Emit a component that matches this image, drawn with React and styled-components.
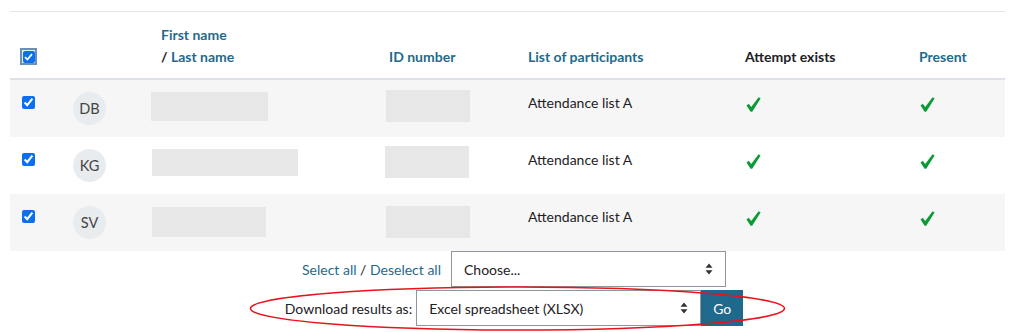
import React from 'react';
import styled, { createGlobalStyle } from 'styled-components';

//* Styles

const GlobalStyle = createGlobalStyle`
  *,
  *:before,
  *:after {
    box-sizing: border-box;
  }
  body {
    margin: 0;
    background-color: #fff;
    font-family: 'Lato', 'Open Sans', sans-serif;
    font-size: 14px;
    color: #1d2125;
  }
`;

const Page = styled.div`
  position: relative;
  width: 1024px;
  height: 332px;
  overflow: hidden;
  padding-top: 11px;
`;

const Table = styled.table`
  margin-left: 10px;
  width: 995px;
  border-collapse: collapse;
  table-layout: fixed;
`;

const Th = styled.th`
  width: ${p => p.w}px;
  padding: 12px 12px 10px;
  line-height: 22px;
  text-align: left;
  vertical-align: bottom;
  font-weight: 700;
  color: ${p => (p.plain ? '#1d2125' : '#1f6a8c')};
  border-top: 1px solid #e3e6ea;
  border-bottom: 2px solid #dee2e6;
`;

const Row = styled.tr`
  background: ${p => (p.striped ? '#f6f6f6' : '#fff')};
  & + & td {
    border-top: 1px solid #e8e8e8;
  }
`;

const Td = styled.td`
  padding: 12px;
  line-height: 21px;
  vertical-align: top;
`;

const Check = styled.input`
  margin: 4px 0 0;
  width: 13px;
  height: 13px;
  accent-color: #0b6ff0;
  display: block;
`;

const HeadCheck = styled.span`
  display: flex;
  align-items: center;
  justify-content: center;
  width: 17px;
  height: 17px;
  margin: 0 0 3px -2px;
  border: 2px solid #6a8fb8;
  background: #e6eef8;
`;

const HeadBox = styled.span`
  display: flex;
  align-items: center;
  justify-content: center;
  width: 12px;
  height: 12px;
  border-radius: 2px;
  background: #0b6ff0;
`;

const Avatar = styled.div`
  width: 33px;
  height: 33px;
  margin-left: 1px;
  border-radius: 50%;
  background: #e9ecef;
  color: #444;
  font-size: 14.5px;
  display: flex;
  align-items: center;
  justify-content: center;
`;

const Redact = styled.div`
  width: ${p => p.w}px;
  height: ${p => p.h}px;
  margin-left: ${p => p.dx}px;
  margin-top: ${p => p.dy}px;
  background: #e7e7e7;
`;

const Green = styled.svg`
  display: block;
  margin: 5px 0 0 1px;
`;

const Controls = styled.div`
  display: flex;
  flex-direction: column;
  align-items: center;
  gap: 3px;
  padding-left: 4px;
`;

const Line = styled.div`
  display: flex;
  align-items: center;
  gap: ${p => p.gap}px;
`;

const Link = styled.a`
  color: #1f6a8c;
  text-decoration: none;
`;

const Label = styled.span`
  color: #1d2125;
`;

const Select = styled.div`
  width: ${p => p.w}px;
  height: 36px;
  padding: 0 12px;
  border: 1px solid #8f959e;
  background: #fff;
  color: #1d2125;
  display: flex;
  align-items: center;
  justify-content: space-between;
`;

const Joined = styled.div`
  display: flex;
`;

const Button = styled.button`
  height: 36px;
  width: 42px;
  border: none;
  background: #1f6a8c;
  color: #fff;
  font-family: inherit;
  font-size: 14px;
  padding: 0;
`;

const Ellipse = styled.svg`
  position: absolute;
  left: 0;
  top: 0;
  pointer-events: none;
`;

//* -------------------------------------------------------------------------

const Tick = () => (
  <Green width="15" height="15" viewBox="0 0 15 15">
    <path d="M0.5 8.6 L2.8 6.8 L5.2 10 L12.6 0.3 L14.6 1.6 L6.2 14.8 L4.6 14.8 Z" fill="#0c9a36" />
  </Green>
);

const Arrows = () => (
  <svg width="8" height="12" viewBox="0 0 8 12">
    <path d="M4 0.5 L7.5 4.8 L0.5 4.8 Z M4 11.5 L7.5 7.2 L0.5 7.2 Z" fill="#333" />
  </svg>
);

// redaction boxes: [width, height, x offset, y offset]
const rows = [
  { initials: 'DB', name: [117, 29, -10, 0], id: [84, 32, -3, -2] },
  { initials: 'KG', name: [146, 27, -9, 0], id: [84, 32, -4, -3] },
  { initials: 'SV', name: [114, 30, -9, 1], id: [84, 32, -3, 0] }
];

const App = () => (
  <Page>
    <GlobalStyle />
    <Table>
      <thead>
        <tr>
          <Th w={50}>
            <HeadCheck>
              <HeadBox>
                <svg width="9" height="8" viewBox="0 0 9 8">
                  <path d="M1 4.2 L3.4 6.5 L8 1.2" stroke="#fff" strokeWidth="1.8" fill="none" />
                </svg>
              </HeadBox>
            </HeadCheck>
          </Th>
          <Th w={89}></Th>
          <Th w={228}>
            First name
            <br />
            <Label>/ </Label>Last name
          </Th>
          <Th w={139}>ID number</Th>
          <Th w={217}>List of participants</Th>
          <Th w={174} plain>Attempt exists</Th>
          <Th w={98}>Present</Th>
        </tr>
      </thead>
      <tbody>
        {rows.map((r, i) => (
          <Row key={r.initials} striped={i !== 1}>
            <Td>
              <Check type="checkbox" checked readOnly />
            </Td>
            <Td>
              <Avatar>{r.initials}</Avatar>
            </Td>
            <Td>
              <Redact w={r.name[0]} h={r.name[1]} dx={r.name[2]} dy={r.name[3]} />
            </Td>
            <Td>
              <Redact w={r.id[0]} h={r.id[1]} dx={r.id[2]} dy={r.id[3]} />
            </Td>
            <Td>Attendance list A</Td>
            <Td>
              <Tick />
            </Td>
            <Td>
              <Tick />
            </Td>
          </Row>
        ))}
      </tbody>
    </Table>
    <Controls>
      <Line gap={10}>
        <span>
          <Link href="#">Select all</Link> / <Link href="#">Deselect all</Link>
        </span>
        <Select w={275}>
          Choose...
          <Arrows />
        </Select>
      </Line>
      <Line gap={4}>
        <Label>Download results as:</Label>
        <Joined>
          <Select w={285}>
            Excel spreadsheet (XLSX)
            <Arrows />
          </Select>
          <Button>Go</Button>
        </Joined>
      </Line>
    </Controls>
    <Ellipse width="1024" height="332">
      <ellipse cx="517.5" cy="308.5" rx="267" ry="21.5" fill="none" stroke="#e8141b" strokeWidth="1.6" />
    </Ellipse>
  </Page>
);

export default App;
